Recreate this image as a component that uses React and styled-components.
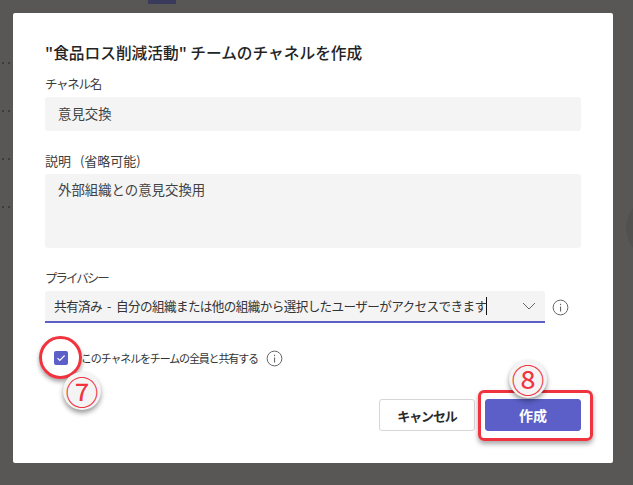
import React from "react";
import styled, { createGlobalStyle } from "styled-components";

const Global = createGlobalStyle`
  html, body { margin: 0; padding: 0; }
  body {
    width: 633px;
    height: 485px;
    overflow: hidden;
    background: #575553;
    font-family: "Noto Sans CJK JP", "Noto Sans", sans-serif;
  }
`;

const Backdrop = styled.div`
  position: relative;
  width: 633px;
  height: 485px;
  padding: 13px 20px 22px 13px;
  box-sizing: border-box;
  background: #595755;
  overflow: hidden;
`;

const TabMark = styled.div`
  position: absolute;
  left: 148px;
  top: 0;
  width: 28px;
  height: 4px;
  background: #3a3a5c;
`;

const DotRail = styled.div`
  position: absolute;
  left: 2px;
  top: 62px;
  display: flex;
  flex-direction: column;
  gap: 46px;
`;

const Dots = styled.div`
  width: 8px;
  display: flex;
  justify-content: space-between;
  &::before, &::after {
    content: "";
    width: 2px;
    height: 2px;
    background: #3d3c3b;
  }
`;

const SideAvatar = styled.div`
  position: absolute;
  left: 626px;
  top: 196px;
  width: 64px;
  height: 64px;
  border-radius: 50%;
  background: #535150;
`;

const Modal = styled.div`
  width: 600px;
  height: 450px;
  background: #fff;
  border-radius: 2px;
  padding: 28px 32px 32px;
  box-sizing: border-box;
  position: relative;
  display: flex;
  flex-direction: column;
`;

const Title = styled.h2`
  margin: 0 0 10px;
  font-size: 15.7px;
  line-height: 24px;
  font-weight: 500;
  color: #242424;
`;

const Group = styled.div`
  display: flex;
  flex-direction: column;
  gap: 4px;
  margin-bottom: 21px;
`;

const Label = styled.div`
  font-size: ${(p) => p.$size || 13}px;
  line-height: 18px;
  color: #3d3d3d;
  letter-spacing: ${(p) => p.$spacing || 0}px;
  word-spacing: ${(p) => p.$words || 0}px;
`;

const Field = styled.div`
  background: #f4f4f4;
  border-radius: 3px;
  width: 536px;
  height: ${(p) => p.$height}px;
  padding: ${(p) => p.$top}px 13px 0;
  box-sizing: border-box;
  font-size: 13.4px;
  line-height: 18px;
  color: #424242;
`;

const SelectRow = styled.div`
  display: flex;
  align-items: center;
  gap: 7px;
`;

const Select = styled.div`
  width: 500px;
  height: 32px;
  background: #f4f4f4;
  border-radius: 3px 3px 0 0;
  border-bottom: 2px solid #5b5fc7;
  padding: 0 9px;
  box-sizing: border-box;
  display: flex;
  align-items: center;
  justify-content: space-between;
`;

const SelectText = styled.span`
  font-size: 12.6px;
  line-height: 18px;
  letter-spacing: -0.62px;
  word-spacing: 3px;
  color: #333;
  white-space: nowrap;
  border-right: 1px solid #111;
`;

const CheckRow = styled.div`
  display: flex;
  align-items: center;
  gap: 8px;
  padding-left: 9px;
  margin-top: 5px;
  height: 18px;
`;

const CheckBox = styled.span`
  position: relative;
  width: 14px;
  height: 14px;
  border-radius: 2px;
  background: #5b5fc7;
  display: flex;
  align-items: center;
  justify-content: center;
  margin-right: 5px;
`;

const CheckLabel = styled.span`
  font-size: 11px;
  letter-spacing: -1.15px;
  color: #333;
  white-space: nowrap;
`;

const Actions = styled.div`
  margin-top: auto;
  display: flex;
  justify-content: flex-end;
  gap: 10px;
`;

const Button = styled.button`
  width: 96px;
  height: 32px;
  border-radius: 3px;
  border: 1px solid ${(p) => (p.$primary ? "#5b5fc7" : "#d6d6d6")};
  background: ${(p) => (p.$primary ? "#5b5fc7" : "#fff")};
  color: ${(p) => (p.$primary ? "#fff" : "#2b2b2b")};
  font-family: inherit;
  font-size: ${(p) => (p.$primary ? 14 : 13)}px;
  letter-spacing: ${(p) => (p.$primary ? 0 : -1.1)}px;
  font-weight: 600;
  padding: 0;
`;

const PrimaryWrap = styled.div`
  position: relative;
`;

// red annotations drawn over the dialog
const Ring = styled.div`
  position: absolute;
  inset: -15px -14px -14px -15px;
  border: 3px solid #f0343f;
  border-radius: 50%;
  box-shadow: 0 3px 4px rgba(0, 0, 0, 0.35);
`;

const ButtonFrame = styled.div`
  position: absolute;
  inset: -9px -12px -10px -7px;
  border: 3px solid #f0343f;
  border-radius: 6px;
  box-shadow: 0 3px 5px rgba(0, 0, 0, 0.35);
`;

const Badge = styled.div`
  position: absolute;
  left: ${(p) => p.$left}px;
  top: ${(p) => p.$top}px;
  width: 38px;
  height: 38px;
  border-radius: 50%;
  background: #f4f4f4;
  box-shadow: 0 3px 5px rgba(0, 0, 0, 0.4);
  color: #f0343f;
  display: flex;
  align-items: center;
  justify-content: center;
  font-family: "Noto Sans CJK JP", sans-serif;
  font-size: 33px;
  line-height: 1;
`;

const InfoIcon = () => (
  <svg width="17" height="17" viewBox="0 0 17 17" fill="none">
    <circle cx="8.5" cy="8.5" r="7.4" stroke="#666" strokeWidth="1" />
    <rect x="8" y="7.5" width="1.1" height="5" fill="#666" />
    <rect x="8" y="4.8" width="1.1" height="1.3" fill="#666" />
  </svg>
);

export default function App() {
  return (
    <Backdrop>
      <Global />
      <TabMark />
      <SideAvatar />
      <DotRail>
        <Dots />
        <Dots />
        <Dots />
        <Dots />
      </DotRail>
      <Modal>
        <Title>"食品ロス削減活動" チームのチャネルを作成</Title>
        <Group>
          <Label $size={12.5} $spacing={-1.3}>チャネル名</Label>
          <Field $height={34} $top={7}>意見交換</Field>
        </Group>
        <Group>
          <Label $words={6}>説明 (省略可能)</Label>
          <Field $height={74} $top={6}>外部組織との意見交換用</Field>
        </Group>
        <Group>
          <Label $size={12.5} $spacing={-2}>プライバシー</Label>
          <SelectRow>
            <Select>
              <SelectText>共有済み - 自分の組織または他の組織から選択したユーザーがアクセスできます</SelectText>
              <svg width="14" height="8" viewBox="0 0 14 8" fill="none">
                <path d="M1 1l6 6 6-6" stroke="#666" strokeWidth="1" />
              </svg>
            </Select>
            <InfoIcon />
          </SelectRow>
        </Group>
        <CheckRow>
          <CheckBox>
            <svg width="10" height="8" viewBox="0 0 10 8" fill="none">
              <path d="M1.5 4.2l2.3 2.3 4.8-5" stroke="#fff" strokeWidth="1.1" />
            </svg>
            <Ring />
            <Badge $left={9} $top={21}>⑦</Badge>
          </CheckBox>
          <CheckLabel>このチャネルをチームの全員と共有する</CheckLabel>
          <InfoIcon />
        </CheckRow>
        <Actions>
          <Button>キャンセル</Button>
          <PrimaryWrap>
            <Button $primary>作成</Button>
            <ButtonFrame />
            <Badge $left={24} $top={-39}>⑧</Badge>
          </PrimaryWrap>
        </Actions>
      </Modal>
    </Backdrop>
  );
}
